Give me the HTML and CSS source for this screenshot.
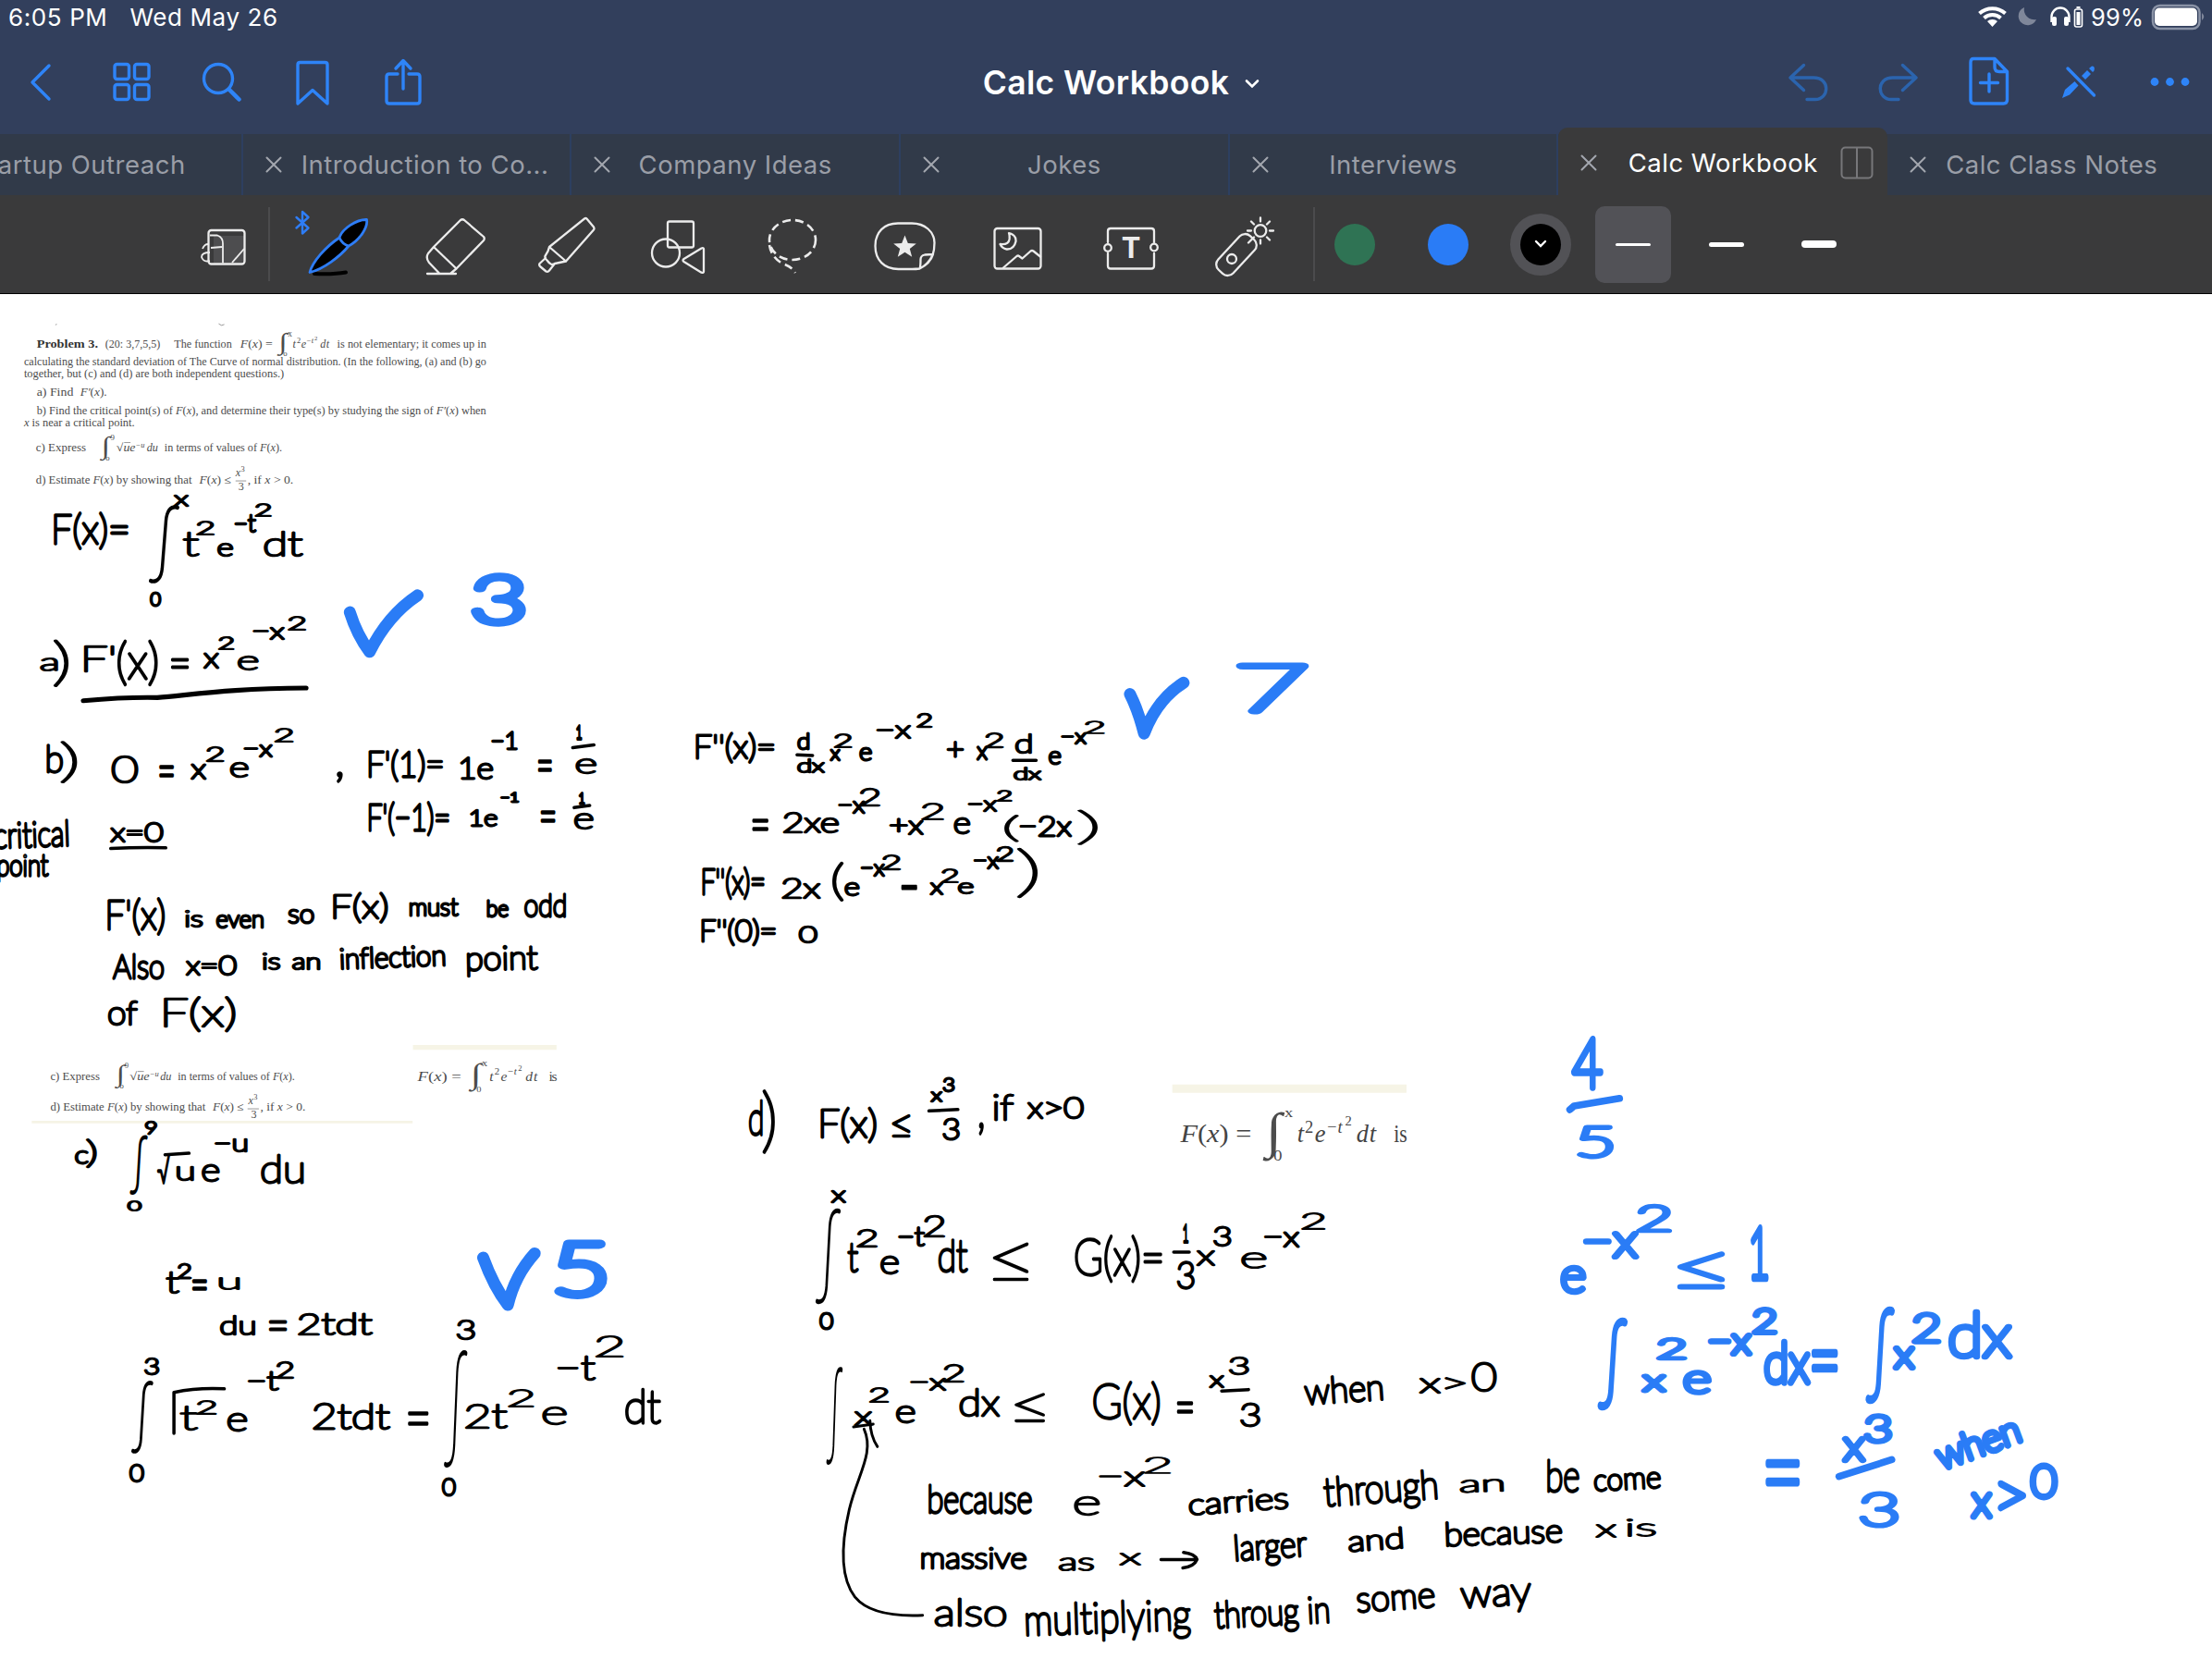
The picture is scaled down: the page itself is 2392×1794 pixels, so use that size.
FILE: index.html
```html
<!DOCTYPE html>
<html lang="en">
<head>
<meta charset="utf-8">
<title>Calc Workbook</title>
<link rel="stylesheet" href="styles.css">
</head>
<body>
<div class="app">
  <header class="status">
    <div class="status-left"><span class="clock">6:05 PM</span><span>Wed May 26</span></div>
    <div class="status-right">
      <svg class="status-icons" viewBox="2135 0 122 36">
        <path class="wifi" d="M2140.500 14.500a21 21 0 0 1 28 0M2145.500 19.500a13.500 13.500 0 0 1 18 0"/>
        <path class="solid" d="M2154.500 29l-5.500-6a8.500 8.500 0 0 1 11 0z"/>
        <path class="moon" d="M2189 8a10 10 0 1 0 13 13a11 11 0 0 1-13-13z"/>
        <path class="head" d="M2218.500 24v-6a9.500 9.500 0 0 1 19 0v6"/>
        <rect class="solid" x="2219" y="18" width="5" height="10" rx="2"/><rect class="solid" x="2232" y="18" width="5" height="10" rx="2"/>
        <rect class="cell" x="2243.500" y="10" width="8" height="19" rx="2"/><rect class="solid" x="2245.500" y="13" width="4" height="14"/><rect class="solid" x="2245.500" y="7" width="4" height="2"/>
      </svg>
      <span class="percent">99%</span>
      <svg class="battery" viewBox="2326 0 60 36">
        <rect class="shell" x="2328" y="6" width="50.500" height="25" rx="7.500"/>
        <rect class="solid" x="2330" y="8.500" width="46" height="19.500" rx="5"/>
        <path class="nub" d="M2381 14q4.500 4 0 8z"/>
      </svg>
    </div>
  </header>
  <nav class="nav">
    <div class="nav-left">
      <svg class="nav-icon" viewBox="-6 41 98 98"><path d="M52 72L34 90L52 108"/></svg>
      <svg class="nav-icon" viewBox="93 41 98 98"><rect x="124" y="70.500" width="15.500" height="16" rx="2.500"/><rect x="145.500" y="70.500" width="15.500" height="16" rx="2.500"/><rect x="124" y="92.500" width="15.500" height="16" rx="2.500"/><rect x="145.500" y="92.500" width="15.500" height="16" rx="2.500"/></svg>
      <svg class="nav-icon" viewBox="191 41 98 98"><circle cx="236" cy="86" r="15.500"/><path class="thick" d="M248 98L258.500 108.500"/></svg>
      <svg class="nav-icon" viewBox="289 41 98 98"><path d="M322 113V71q0-2.500 2.500-2.500h27q2.500 0 2.500 2.500v42l-16-14.500z"/></svg>
      <svg class="nav-icon" viewBox="387 41 98 98"><path d="M430 81h-9q-3 0-3 3v26q0 3 3 3h30q3 0 3-3v-26q0-3-3-3h-9M436 97V67M428 75l8-8.500l8 8.500"/></svg>
    </div>
    <h1 class="doc-title">Calc Workbook<svg class="chevron" viewBox="0 0 18 12"><path d="M3 2.500l6 6l6-6"/></svg></h1>
    <div class="nav-right">
      <svg class="nav-icon dim" viewBox="1908 41 98 98"><path d="M1952.500 71.500L1938 85l14.500 13.500M1938 85h25c19 0 17 23.500 2 23.500h-9"/></svg>
      <svg class="nav-icon dim" viewBox="2006 41 98 98"><path d="M2059.500 71.500L2074 85l-14.500 13.500M2074 85h-25c-19 0-17 23.500-2 23.500h8"/></svg>
      <svg class="nav-icon" viewBox="2104 41 98 98"><path d="M2136 64.500h23l13.500 14v30.500q0 4-4 4h-31.500q-4 0-4-4v-40.500q0-4 3-4zM2159 64.500v9q0 5 5 5h8.500M2153 81v19M2143.500 90.500h19"/></svg>
      <svg class="nav-icon" viewBox="2201 41 98 98"><path d="M2237 75l28.500 29"/><path class="fillb" d="M2231 107l3-9l10.500-9l4 4.500l-9.500 10zM2252 83l6-6l4 4l-6 6zM2260 75l3-2.500q4 0 2.500 5l-1.500 1.500z"/></svg>
      <svg class="nav-icon" viewBox="2299 41 98 98"><circle class="fillb" cx="2331" cy="89.500" r="4.400"/><circle class="fillb" cx="2347.500" cy="89.500" r="4.400"/><circle class="fillb" cx="2364" cy="89.500" r="4.400"/></svg>
    </div>
  </nav>
  <div class="tabs">
    <div class="tab"><span class="close"></span><span class="tab-name">Startup Outreach</span></div>
    <div class="tab"><svg class="close" viewBox="0 0 18 18"><path d="M1.500 1.500l15 15M16.500 1.500l-15 15"/></svg><span class="tab-name">Introduction to Co...</span></div>
    <div class="tab"><svg class="close" viewBox="0 0 18 18"><path d="M1.500 1.500l15 15M16.500 1.500l-15 15"/></svg><span class="tab-name">Company Ideas</span></div>
    <div class="tab"><svg class="close" viewBox="0 0 18 18"><path d="M1.500 1.500l15 15M16.500 1.500l-15 15"/></svg><span class="tab-name">Jokes</span></div>
    <div class="tab"><svg class="close" viewBox="0 0 18 18"><path d="M1.500 1.500l15 15M16.500 1.500l-15 15"/></svg><span class="tab-name">Interviews</span></div>
    <div class="tab active"><svg class="close" viewBox="0 0 18 18"><path d="M1.500 1.500l15 15M16.500 1.500l-15 15"/></svg><span class="tab-name">Calc Workbook</span><svg class="split" viewBox="0 0 36 36"><rect x="1.500" y="1.500" width="33" height="33" rx="4"/><path d="M18 1.500v33"/></svg></div>
    <div class="tab"><svg class="close" viewBox="0 0 18 18"><path d="M1.500 1.500l15 15M16.500 1.500l-15 15"/></svg><span class="tab-name">Calc Class Notes</span></div>
  </div>
  <div class="toolbar">
    <svg class="page-tool" viewBox="210 211 70 106"><rect class="pane" x="231" y="255" width="33" height="30"/><rect x="225.500" y="249" width="39" height="36.500" rx="3"/><path class="thin" d="M227 254.500h8q6 2 6 9v21M228 268l12-1M251 284l13-15M219 269q2-5 6-5M227 273q-9 0-9 5q2 6 9 4"/></svg>
    <div class="rule"></div>
    <svg class="tool" viewBox="0 0 122 106"><path class="shadow" d="M32 85q20 1 34-1.500"/><path class="pen" d="M27 83.500C30 72 44 56 59 46q3 7 10 9C60 66 42 80 27 83.500zM59 46C62 36 78 26 88.500 26.500C90 34 82 48 69 55q-7-2-10-9z"/><path class="bt" d="M12.500 24L25.500 35.500L19 41.500V18L25.500 24L12.500 35.500"/></svg>
    <svg class="tool" viewBox="0 0 122 106"><path d="M68 27q2-1.500 4 0L93 45q1.500 2 0 4L63.500 79.500L39 56zM39 56l-6 7q-3 5 1 10l11 11.500M63.500 79.500l-6 5M32 85h31"/></svg>
    <svg class="tool" viewBox="0 0 122 106"><path d="M42 56L80 25.500q1.500-1 2.500 0l7.500 9q1 2 0 3L60 71.500zM42 56q-1 5-4 9q-2 3 2 6q4 6 8 3l12-2.500M38 68l-6.500 6q-1 2 1 3.500l6 5q2 1 3.500-1l5.500-7"/></svg>
    <svg class="tool" viewBox="0 0 122 106"><rect x="48" y="28.500" width="28" height="28" rx="2"/><circle cx="46" cy="62.500" r="15"/><path d="M84.500 57.500q2.500-1 2.500 1v24q0 2-2.500 1.200L65.500 72q-2-1.500 0-3z"/></svg>
    <svg class="tool" viewBox="0 0 122 106"><ellipse class="dash" cx="61" cy="48.500" rx="25" ry="21.500"/><path class="dash" d="M36 54q2 13 14 20q10 3 14 10"/></svg>
    <svg class="tool" viewBox="0 0 122 106"><path d="M53 30.500h15c14 0 24.500 9 24.500 21q0 8-2 13.500q-5 10-14 14.500q-4 .500-8 .500h-15C38 80 28.500 70 28.500 55S38 30.500 53 30.500zM91 64l-9 .500q-4.500 1-4.500 5q0 8-1 10M91 64q-3 10-14.500 15.500"/><path class="fillw" d="M60.500 43.500l3.300 8.500l9 .500l-7 5.500l2.400 8.800l-7.700-5l-7.700 5l2.400-8.800l-7-5.500l9-.500z"/></svg>
    <svg class="tool" viewBox="0 0 122 106"><rect x="35.500" y="36" width="50" height="43.500" rx="3"/><path d="M51 41q8 2 7.500 9q-2 9-10 8.500q-5-1-7-5.500q9 1 10-5q.500-4-.500-7zM45 78.500L59.500 66q1.500-1 2.500 0l3.500 2.500l9-8q1.500-1 3 0l7.500 6"/></svg>
    <svg class="tool" viewBox="0 0 122 106"><path d="M36 51V39q0-3 3-3h44q3 0 3 3v12M36 63v13.500q0 3 3 3h44q3 0 3-3V63"/><circle cx="36" cy="57" r="3.800"/><circle cx="86" cy="56.500" r="3.800"/><text class="tool-letter" x="61" y="68">T</text></svg>
    <svg class="tool" viewBox="0 0 122 106"><rect x="42" y="39.500" width="22" height="50" rx="8" transform="rotate(43 53 64.500)"/><circle cx="48" cy="69" r="5"/><circle cx="79" cy="38.500" r="6.300"/><path d="M79 24.500v4M79 48.500v4M65 38.500h4M89 38.500h4M69 28.500l3 3M86 45.500l3 3M89 28.500l-3 3M72 45.500l-6 6"/></svg>
    <div class="rule second"></div>
    <div class="swatches">
      <div class="slot"><span class="dot green"></span></div>
      <div class="slot"><span class="dot blue"></span></div>
      <div class="slot"><span class="dot black"><svg class="chev" viewBox="0 0 14 10"><path d="M2 2l5 5l5-5"/></svg></span></div>
      <div class="slot"><span class="width selected"><i class="bar fine"></i></span></div>
      <div class="slot"><span class="width"><i class="bar medium"></i></span></div>
      <div class="slot"><span class="width"><i class="bar bold"></i></span></div>
    </div>
  </div>
  <main class="paper">
    <svg class="sheet" viewBox="0 208.450 1568 967.550">
      <g class="print">
        <path class="hair" d="M39.500 230.500l.600-1M155 229.500q2 2 4 .500"/>
        <text class="strong" x="26" y="246.500" textLength="43.500" lengthAdjust="spacingAndGlyphs">Problem 3.</text>
        <text x="74.600" y="246.500" textLength="39" lengthAdjust="spacingAndGlyphs">(20: 3,7,5,5)</text>
        <text x="123.400" y="246.500" textLength="41" lengthAdjust="spacingAndGlyphs">The function</text>
        <text x="170.300" y="246.500" textLength="23" lengthAdjust="spacingAndGlyphs"><tspan class="it">F</tspan>(<tspan class="it">x</tspan>) =</text>
        <text class="it" x="207.500" y="246.500">t</text><text class="sup" x="210.400" y="243.500">2</text><text class="it" x="213.500" y="246.500">e</text><text class="sup it" x="217" y="243.500">−t</text><text class="tiny" x="222.800" y="241.500">2</text><text class="it" x="227" y="246.500" textLength="6.500">dt</text>
        <text x="239" y="246.500" textLength="105.700" lengthAdjust="spacingAndGlyphs">is not elementary; it comes up in</text>
        <text x="17" y="259" textLength="327.700" lengthAdjust="spacingAndGlyphs">calculating the standard deviation of The Curve of normal distribution. (In the following, (a) and (b) go</text>
        <text x="17" y="267.700" textLength="184.400" lengthAdjust="spacingAndGlyphs">together, but (c) and (d) are both independent questions.)</text>
        <text x="26" y="280.600" textLength="26" lengthAdjust="spacingAndGlyphs">a) Find</text>
        <text x="56.800" y="280.600" textLength="19" lengthAdjust="spacingAndGlyphs"><tspan class="it">F′</tspan>(<tspan class="it">x</tspan>).</text>
        <text x="26" y="293.500" textLength="318.700" lengthAdjust="spacingAndGlyphs">b) Find the critical point(s) of <tspan class="it">F</tspan>(<tspan class="it">x</tspan>), and determine their type(s) by studying the sign of <tspan class="it">F′</tspan>(<tspan class="it">x</tspan>) when</text>
        <text x="17" y="302.200" textLength="78.500" lengthAdjust="spacingAndGlyphs"><tspan class="it">x</tspan> is near a critical point.</text>
        <text x="25.400" y="320" textLength="35.600" lengthAdjust="spacingAndGlyphs">c) Express</text>
        <text class="it" x="82.500" y="320" textLength="13.500" lengthAdjust="spacingAndGlyphs">√ue</text><path class="hair" d="M88 313.700h4.500"/><text class="sup it" x="96" y="317">−u</text><text class="it" x="104" y="320" textLength="8" lengthAdjust="spacingAndGlyphs">du</text>
        <text x="116.600" y="320" textLength="83.400" lengthAdjust="spacingAndGlyphs">in terms of values of <tspan class="it">F</tspan>(<tspan class="it">x</tspan>).</text>
        <text x="25.400" y="342.600" textLength="110.600" lengthAdjust="spacingAndGlyphs">d) Estimate <tspan class="it">F</tspan>(<tspan class="it">x</tspan>) by showing that</text>
        <text x="141.300" y="342.600" textLength="22.500" lengthAdjust="spacingAndGlyphs"><tspan class="it">F</tspan>(<tspan class="it">x</tspan>) ≤</text>
        <text class="it" x="167" y="337.500">x</text><text class="sup" x="170.800" y="334.500">3</text><path class="hair" d="M167 340.900h7.500"/><text x="169" y="347.300">3</text>
        <text x="175.500" y="342.600" textLength="32.500" lengthAdjust="spacingAndGlyphs">, if <tspan class="it">x</tspan> &gt; 0.</text>
      </g>
      <g class="print">
        <path class="cream" d="M292.700 740.700h101.800v3.500h-101.800zM22.500 794.500h270v1.800h-270zM831 768.700h166v5.900h-166z"/>
        <text x="35.700" y="765.700" textLength="35" lengthAdjust="spacingAndGlyphs">c) Express</text>
        <text class="it" x="92" y="765.700" textLength="14" lengthAdjust="spacingAndGlyphs">√ue</text><path class="hair" d="M97.500 759.500h4.500"/><text class="sup it" x="106" y="762.700">−u</text><text class="it" x="113.500" y="765.700" textLength="8" lengthAdjust="spacingAndGlyphs">du</text>
        <text x="126" y="765.700" textLength="83" lengthAdjust="spacingAndGlyphs">in terms of values of <tspan class="it">F</tspan>(<tspan class="it">x</tspan>).</text>
        <text x="35.700" y="787.500" textLength="110" lengthAdjust="spacingAndGlyphs">d) Estimate <tspan class="it">F</tspan>(<tspan class="it">x</tspan>) by showing that</text>
        <text x="150.800" y="787.500" textLength="22" lengthAdjust="spacingAndGlyphs"><tspan class="it">F</tspan>(<tspan class="it">x</tspan>) ≤</text>
        <text class="it" x="176" y="782.500">x</text><text class="sup" x="179.800" y="779.500">3</text><path class="hair" d="M175.500 786h8"/><text x="178" y="792.500">3</text>
        <text x="184.500" y="787.500" textLength="32" lengthAdjust="spacingAndGlyphs">, if <tspan class="it">x</tspan> &gt; 0.</text>
      </g>
      <g class="print mid">
        <text x="296" y="766" textLength="31" lengthAdjust="spacingAndGlyphs"><tspan class="it">F</tspan>(<tspan class="it">x</tspan>) =</text>
        <text class="it" x="347" y="766">t</text><text class="sup" x="350.500" y="762">2</text><text class="it" x="355" y="766">e</text><text class="sup it" x="359.500" y="762">−t</text><text class="tiny" x="367.200" y="759">2</text><text class="it" x="372.500" y="766" textLength="8.500">dt</text><text x="389" y="766" textLength="6">is</text>
      </g>
      <g class="print large">
        <text x="836.700" y="809.700" textLength="50.500" lengthAdjust="spacingAndGlyphs"><tspan class="it">F</tspan>(<tspan class="it">x</tspan>) =</text>
        <text class="it" x="919.500" y="809.700">t</text><text class="sup" x="925" y="803">2</text><text class="it" x="932" y="809.700">e</text><text class="sup it" x="940" y="803">−t</text><text class="tiny" x="953.500" y="798">2</text><text class="it" x="961.500" y="809.700" textLength="14">dt</text><text x="988" y="809.700" textLength="9.500" lengthAdjust="spacingAndGlyphs">is</text>
      </g>
      <g id="print-signs" class="fitted"></g>
      <g id="black-ink" class="ink"></g>
      <g id="blue-ink" class="ink blue-pen"></g>
      <g id="blue-marker" class="ink blue-pen marker"></g>
      <g class="stroke">
        <path class="w5" d="M59 496.700Q90 494 111.500 494.500C140 492 165 488 217 487.700"/>
        <path d="M406 530l15-2M407 572.500l11-1.500M78.500 601.500q20-1 39-.500M565 535l11 .500M718 539h16.500M658.500 787.500l20.500-1M832 887.500h11M866 986l19-1"/>
        <path d="M117 818.500l17-1M123.300 1016V987Q140 983.500 159 984.500"/>
        <path class="w2" d="M605 1011.500l14-2M616.700 1007Q617 1018 622 1025.500M612.500 1013C620 1030 608 1045 602 1070C595 1100 597 1120 606 1132C615 1143 632 1146 654 1145"/>
        <path d="M823 1105.500h25M839 1100.500q8 1 9.500 5q-2 5-10 6"/>
      </g>
      <g class="stroke blue-stroke">
        <path d="M1112.800 786.600l3-2.600L1148 778.600M1303.600 1046.600L1341 1034.700"/>
        <path class="fat" d="M248 434Q253 450 262 462Q275 436 296 422M801 492Q807 504 811 520Q820 496 839 484M342.500 891.500Q350 912 360 925Q365 904 379 888.500"/>
      </g>
    </svg>
  </main>
</div>
<script src="notes.js"></script>
</body>
</html>
```
FILE: styles.css
```css
* { box-sizing: border-box; }
body { margin: 0; background: #fff; font-family: Inter, "Liberation Sans", sans-serif; }
.app { width: 2392px; height: 1794px; display: flex; flex-direction: column; overflow: hidden; }

.status { height: 36px; background: #323f5c; color: #fff; display: flex; justify-content: space-between; font-size: 26px; line-height: 37px; padding: 0 6px 0 9px; letter-spacing: .6px; }
.status-left { display: flex; gap: 24px; }
.status-right { display: flex; align-items: center; }
.status-icons { width: 122px; height: 36px; }
.percent { width: 69px; padding-left: 4px; font-size: 25.500px; letter-spacing: .2px; }
.battery { width: 60px; height: 36px; }
.solid { fill: #fff; }
.wifi { fill: none; stroke: #fff; stroke-width: 4; }
.head { fill: none; stroke: #fff; stroke-width: 2.4; }
.cell { fill: none; stroke: #fff; stroke-width: 1.6; }
.moon, .nub { fill: #7f879a; }
.shell { fill: none; stroke: #8a93a6; stroke-width: 2.5; }

.nav { height: 109px; padding-bottom: 3px; background: #323f5c; display: grid; grid-template-columns: 1fr auto 1fr; align-items: center; }
.nav-left { display: flex; margin-left: -5px; }
.nav-right { display: flex; justify-content: flex-end; margin-right: -4px; }
.nav-icon { flex: none; width: 98px; height: 98px; fill: none; stroke: #2e84f8; stroke-width: 3.4; stroke-linecap: round; stroke-linejoin: round; }
.nav-icon.dim { stroke: #2b64ae; }
.nav-icon .thick { stroke-width: 4.5; }
.nav-icon .fillb { fill: #2e84f8; stroke: none; }
.doc-title { margin: 0; color: #fff; font-size: 35.500px; font-weight: 600; position: relative; letter-spacing: .35px; }
.chevron { position: absolute; left: 100%; top: 17px; margin-left: 16px; width: 18px; height: 12px; fill: none; stroke: #fff; stroke-width: 2.6; stroke-linecap: round; }

.tabs { height: 66px; background: #313a49; display: flex; }
.tab { flex: 0 0 355.700px; height: 66px; display: grid; grid-template-columns: 63px minmax(0, 1fr) 63px; align-items: center; border-right: 2px solid #2d3f60; color: #9a9ea7; font-size: 27.500px; background: #313a49; }
.tab:first-child { margin-left: -93px; }
.close { width: 18px; height: 18px; margin-left: 24px; fill: none; stroke: #a3a7af; stroke-width: 2; stroke-linecap: round; }
.tab-name { text-align: center; white-space: nowrap; letter-spacing: .5px; }
.tab.active { background: #3a3a3b; color: #fff; margin-top: -7px; padding-top: 3px; height: 73px; border-right: 0; border-radius: 10px 10px 0 0; }
.split { width: 36px; height: 36px; margin-left: 12px; fill: none; stroke: #77777a; stroke-width: 2; }

.toolbar { height: 107px; background: #3a3a3b; border-bottom: 1px solid #000; display: flex; align-items: center; }
.page-tool { width: 70px; height: 106px; margin-left: 210px; fill: none; stroke: #ececec; stroke-width: 2.3; }
.page-tool .pane { fill: #4d4d4f; stroke: none; }
.page-tool .thin { stroke-width: 1.8; }
.rule { width: 2px; height: 80px; background: #4b4b4d; margin: 0 16px 0 10px; }
.rule.second { margin: 0 0 0 14px; }
.tool { width: 122px; height: 106px; flex: none; fill: none; stroke: #ececec; stroke-width: 2.3; stroke-linecap: round; stroke-linejoin: round; }
.tool .pen { fill: #000; stroke: #2e7df6; stroke-width: 2.8; }
.tool .shadow { stroke: #000; stroke-width: 4; }
.tool .bt { stroke: #2e7df6; stroke-width: 2.4; }
.tool .dash { stroke-dasharray: 9 5; stroke-linecap: butt; stroke-width: 2.6; }
.tool .fillw { fill: #ececec; stroke: none; }
.tool-letter { font-size: 31px; font-weight: 700; fill: #ececec; stroke: none; text-anchor: middle; }
.swatches { display: flex; margin-left: -7px; }
.slot { width: 100.400px; display: flex; align-items: center; justify-content: center; }
.dot { width: 44px; height: 45px; border-radius: 50%; display: flex; align-items: center; justify-content: center; }
.green { background: #2f7354; }
.blue { background: #2a7cf6; }
.black { background: #000; box-shadow: 0 0 0 11px #525256; }
.chev { width: 14px; height: 10px; fill: none; stroke: #fff; stroke-width: 2.4; stroke-linecap: round; }
.width { width: 82px; height: 83px; border-radius: 10px; display: flex; align-items: center; justify-content: center; }
.width.selected { background: #525257; }
.bar { width: 38px; background: #fff; border-radius: 4px; }
.fine { height: 3px; }
.medium { height: 5px; }
.bold { height: 8px; }

.paper { flex: 1; background: #fff; }
.sheet { display: block; width: 2392px; height: 1476px; overflow: hidden; }
.print { font-family: "Liberation Serif", serif; font-size: 7.900px; fill: #4c4c4c; }
.print.mid { font-size: 10.200px; }
.print.large { font-size: 17.300px; fill: #444; }
.print .it { font-style: italic; }
.print .strong { font-weight: 700; fill: #333; }
.print .sup { font-size: .7em; }
.print .tiny { font-size: .55em; }
.hair { fill: none; stroke: #777; stroke-width: .5; }
.cream { fill: #f6f4e6; }
.fitted text { font-family: "Liberation Serif", serif; font-size: 100px; fill: #4c4c4c; }
.ink text { font-family: Lato, sans-serif; font-weight: 100; font-size: 100px; font-variant-ligatures: none; fill: #000; stroke: #000; stroke-width: 3.200px; stroke-linejoin: round; stroke-linecap: round; vector-effect: non-scaling-stroke; }
.ink.blue-pen text { fill: #2a7cf6; stroke: #2a7cf6; stroke-width: 6.800px; }
.ink.marker text { stroke-width: 11px; }
.stroke { fill: none; stroke: #000; stroke-width: 2.300; stroke-linecap: round; stroke-linejoin: round; }
.stroke .w5 { stroke-width: 3.400; }
.stroke .w2 { stroke-width: 1.900; }
.blue-stroke { stroke: #2a7cf6; stroke-width: 5; }
.blue-stroke .fat { stroke-width: 8.500; }
```
FILE: notes.js
```js
// Each note: [text, left, top, right, bottom, rotation]; the text is fitted to its box on the sheet.
const black = [
["F(x)=",38,362,91,390],["∫",105,357.5,127.5,413.5],["x",123,350.5,134,359.5],["0",106,419.5,114.5,430.5],["t",129.5,377.5,141.5,395.5],["2",139,368.5,152,380],["e",154,385,165.5,395.5],["−t",166,364,182,378],["2",180.5,356,192.5,366.5],["dt",187,376,215,395.5],
["a",28.5,466,41,476.5],[")",38,453,48.5,487.5],["F'",59.5,457.5,81,477],["(x)",83,453,112,487],["=",121,466,134,474],["x",144,463,155.5,474.5],["2",154.5,451,166,461.5],["e",168.5,464,183.5,475.7],["−x",179,444.5,202,454],["2",204,436,217,447.5],
["b",33,527,45,548.5],[")",43,525,54.5,556],["0",79,535.5,98,556],["=",112.5,542.5,123.5,551],["x",135,541,146.5,553],["2",146,528.5,159,540.5],["e",163,540,176.5,552],["−x",172.5,527.5,193.5,537.5],["2",194.5,516,208,527],[",",238.5,547,243,555.5],
["F'(1)=",261,531,314,555],["1e",326,536,350,553],["−1",348,518,367,532],["=",381,538.5,391.5,547],["1",408,513.5,413,525],["e",408,537.5,423,549.5],
["F'(−1)=",261,568,318.5,593],["1e",333,573.5,353,586.5],["−1",354.5,561,368,569.5],["=",383,575,394,583.5],["1",410,561.5,415,570.5],["e",407,576,421,588.5],
["critical",-4,582,49,602.5,-2],["point",-2,605,35,625.5],["x=0",78,582,116,597.5],
["F'(x)",76,636,117,663.5],["is",131,645,144,658],["even",153,648,187,658.5],["so",204,644,223,655.5],["F(x)",236,632,275,655],["must",290,636,325.5,650],["be",345,637,361,651],["odd",371.5,632,401.5,651],
["Also",79.5,675,116.5,694.5],["x=0",131.5,677,168,692],["is",186,675,199,688.5],["an",207,678.5,227,688.5],["inflection",241,671,316,688,-2],["point",331,670,382,693,-1],
["of",76.5,708,98,727.5],["F(x)",116,706,167,732],
["F''(x)=",493,518,549,541.5],["d",565,518.5,574,532],["dx",565,536.5,585,548.5],["x",588,531,596,540],["2",591,519.5,604,531],["e",609,529.5,618.5,540],["−x",621,513.5,646,524],["2",649.5,505,661,516.5],["+",671,525,683.5,537.5],["x",692,528.5,700.5,539],["2",698,518.5,711.5,531],["d",719.5,518.5,731.5,534.5],["dx",718.5,543,738.5,553.5],["e",743,531.5,752.5,542.5],["−x",752,519,770.5,528],["2",768.5,511,783,521],
["=",533,580.5,545,589],["2xe",555,575,595,591],["−x",594,567,613.5,577],["2",609,558,624,572],["+x",630.5,579.5,655,592],["2",653,569,669,582],["e",676,579.5,688,592],["−x",686,567,707,576],["2",706.5,559.5,717.5,569],["(",712,577,722,598],["−2x",722.5,577.5,760,593.5],[")",764,573,778,600],
["F''(x)=",497.5,614,542,638],["2x",554,621.5,582,637.5],["(",590,611,598,639.5],["e",598.5,625,609.5,636],["−x",610,612.5,627.5,622],["2",625,605,638.5,617.5],["−",638,627.5,651,630.5],["x",659,625.5,669,635],["2",667,615.5,679.5,626.5],["e",679,625,690.5,634.5],["−x",690,607,708.5,616.5],["2",706,599,718.5,611.5],[")",721,600.5,735.5,637.5],
["F''(0)=",497,650,550,671],["0",566,656,579.5,669.5],
["c",53,815.5,63,826],[")",61,806.5,68.5,828.5],["∫",91.5,804.5,105,847],["9",102.5,794.5,111.5,805],["0",90,850,100.5,859],["√",111,817.5,121,839.5],["u",125,826,137.5,837.5],["e",143,825,156,838.5],["−u",152,807,175.5,817.5],["du",185,818,215.5,840],
["t",117.5,901,127.5,917.5],["2",125.5,894.5,136,907],["=",136,906.5,147,914.5],["u",155,905,170,915],["du",156,931.5,181,947],["=",190.5,936,203.5,943.5],["2tdt",211,929,264.5,947],
["3",323.5,935,337,950.5],["∫",314,957,332,1040.5],["0",313,1046.5,323.5,1061],["3",102,962,113,975],["∫",92.5,978.5,109,1030.5],["0",91.5,1037.5,102.5,1051.5],["t",127.5,996,140.5,1014.5],["2",139,992,153.5,1003.5],["e",161,1001.5,175.5,1015.5],["−t",175.5,972,198,986.5],["2",195.5,965,208.5,978],["2tdt",221.5,993.5,277,1014],["=",289,1001,304,1011],["2t",329.5,994.5,360,1013.5],["2",360,984,378.5,998],["e",384.5,997,402,1011],["−t",395,961.5,422.5,979.5],["2",422,946,442,962.5],["dt",443,984,469,1010.5],
["d",530.5,779.5,541,806],[")",540.5,772,549.5,818.5],["F(x)",581.5,784,621.5,811],["≤",632,790,645.5,807],["x",659.5,773.5,668.5,782],["3",668,763,677,774.5],["3",668,792,680.5,809],[",",693.5,796,697.5,805.5],["if",704,775.5,719,795],["x>0",728,777,768.5,794],
["x",589,843.5,600,853],["∫",577.5,856,596.5,924.5],["0",580.5,929.5,591,943],["t",600.5,881,609,902.5],["2",607,870.5,622,885],["e",624,890,637.5,904],["−t",636.5,869,656,884],["2",654.5,861,670,877.5],["dt",665,877.5,686.5,902.5],["≤",703.5,880,729.5,908],["G(x)=",761.5,875,824,910],["1",838,867,843,881.5],["3",834,894,847,914.5],["x",848,885.5,861.5,897.5],["3",860,869,873,884.5],["e",880,887,898,900],["−x",896,873,921.5,885],["2",922.5,858.5,939.5,872],
["∫",585,968.5,598,1038],["x",605.5,1000,618.5,1011],["2",616,982.5,630,994.5],["e",635,996,649,1009.5],["−x",645,976.5,671,986.5],["2",668.5,966.5,683.5,980.5],["dx",680,984,709,1005],["≤",719,987,741,1008.5],["G(x)",774.5,979,822.5,1011],["=",834,993.5,846,1002],["x",857,974.5,868,984],["3",871,960.5,885.5,975],["3",879,994,893.5,1012],["when",925,976,981,997,-4],["x>",1006,976,1039,988.5],["0",1043,965,1061,987],
["because",658,1052,732,1074],["e",761.5,1060,780,1075],["−x",779,1043,812,1054.5],["2",811,1032.5,830,1045.5],["carries",843,1058,914,1075,-4],["through",939,1046,1020,1074,-4],["an",1035,1048.5,1066,1059,-2],["be",1096.5,1034,1120,1059],["come",1130,1045,1178,1058,-3],
["massive",653,1096,728,1113],["as",750.5,1103.5,775.5,1114],["x",793.5,1100.5,809,1110.5],["larger",876,1087,928,1112,-4],["and",956,1084,995,1101,-4],["because",1025,1078,1108,1097,-2],["x",1131,1080,1146,1090.5],["is",1153,1075.5,1174,1090],
["also",662.5,1133,713.5,1154],["multiplying",727.5,1136,845,1166,-2],["throug in",861,1134,943,1160,-3],["some",962,1129,1018,1144,-4],["way",1036,1125,1087,1146,-4]];
const blue = [
["4",1113,734,1137,773],["5",1118,796,1143.5,822.5],["e",1106,897,1125,918.5],["−x",1122,872.5,1162,893],["2",1160,852.5,1185,874.5],["≤",1189,886.5,1223,914.5],["1",1240,868,1254.5,908],
["∫",1131.5,934,1154.5,1000],["x",1163.5,973,1181.5,988],["2",1174,947,1195.5,965.5],["e",1193,970.5,1213.5,989.5],["−x",1210.5,945,1242.5,962],["2",1241.5,925.5,1260,947],["dx",1250,949,1284,982.5],["=",1283.5,957,1303.5,972.5],
["∫",1321.5,926,1344,995],["x",1341.5,954,1358,972],["2",1355,930,1376,953.5],["dx",1381,928,1427,964],["=",1251,1034,1276.5,1053],["x",1305.5,1018,1323,1037],["3",1321,1001,1341.5,1024.5],["3",1318,1055.5,1346,1084],["when",1375,1020,1438,1044,-20],["x",1396.5,1057.5,1413,1077.5],[">",1416,1049,1436.5,1071.5],["0",1438.5,1036.5,1459,1064]];
const marker = [["3",334,405.5,372.5,445.5],["7",877,468.5,927,508],["5",393,877.5,430,922]];
const signs = [["∫",196.5,236,205,252.5],["x",204,235.5,207,238.5],["0",201,249.500,203.5,252.5],["∫",70.5,309,79,326.5],["9",78.5,308.5,81,312],["0",75,323.5,77.5,326.5],["∫",81,754.5,89.5,771.5],["9",88.7,753.5,91,757],["0",85,768.5,87.5,771.5],
["∫",332,753.5,342.5,774],["x",341.500,753,345.500,756],["0",338,770,341,774],["∫",895,788,911,823],["x",910.5,787.5,916.5,792],["0",903,816,908.5,823]];

const ctx = document.createElement("canvas").getContext("2d");
ctx.letterSpacing = "0.01px";
function fit(id, notes, font, pen) {
  const group = document.getElementById(id), half = pen / 2 / 1.5255;
  ctx.font = font;
  for (const [text, l, t, r, b, turn = 0] of notes) {
    const m = ctx.measureText(text);
    const x0 = -m.actualBoundingBoxLeft, y1 = m.actualBoundingBoxDescent;
    const sx = Math.max(.3, r - l - pen / 1.5255) / (m.actualBoundingBoxRight - x0);
    const sy = Math.max(.3, b - t - pen / 1.5255) / (m.actualBoundingBoxAscent + y1);
    const node = document.createElementNS("http://www.w3.org/2000/svg", "text");
    node.textContent = text;
    node.setAttribute("transform", `translate(${l + half} ${b - half}) rotate(${turn}) scale(${sx} ${sy}) translate(${-x0} ${-y1})`);
    group.appendChild(node);
  }
}
fit("print-signs", signs, '100px "Liberation Serif"', 0);
fit("black-ink", black, '100 100px Lato', 3.2);
fit("blue-ink", blue, '100 100px Lato', 6.8);
fit("blue-marker", marker, '100 100px Lato', 11);
```
